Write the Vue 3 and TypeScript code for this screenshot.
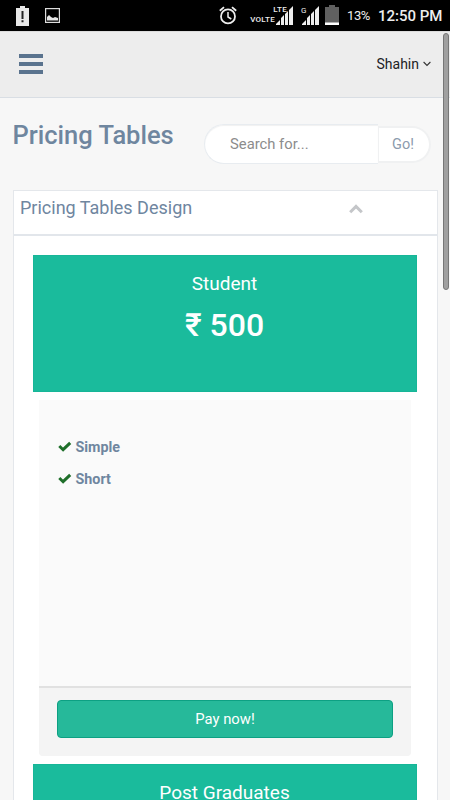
<script setup lang="ts">
interface Plan {
  name: string
  price?: string
  features: string[]
}

const plans: Plan[] = [
  { name: 'Student', price: '₹ 500', features: ['Simple', 'Short'] },
  { name: 'Post Graduates', features: [] },
]
</script>

<template>
  <div class="screen">
    <div class="status">
      <svg class="battery-alert" width="13" height="20" viewBox="0 0 13 20">
        <path d="M0 2h4V0h5v2h4v18H0z" fill="#e8e8e8" />
        <path d="M5.5 5h2v8h-2zM5.5 14.2h2v2h-2z" fill="#222" />
      </svg>
      <svg class="picture" width="15" height="15" viewBox="0 0 15 15">
        <rect x=".6" y=".6" width="13.8" height="13.8" fill="none" stroke="#ddd" stroke-width="1.2" />
        <path d="M2 12.5V9l2-2 2 2 2 1 2-1 3 1v2.5z" fill="#e6e6e6" />
      </svg>
      <svg class="alarm" width="18" height="19" viewBox="0 0 18 19" fill="none" stroke="#eee">
        <circle cx="9" cy="10.4" r="7" stroke-width="1.8" />
        <path d="M9 6v5l3.3 2" stroke-width="1.5" />
        <path d="M.8 4.8 5 1.1M17.2 4.8 13 1.1" stroke-width="1.8" />
      </svg>
      <span class="network"><span>LTE</span><span>VOLTE</span></span>
      <svg class="signal first" width="18" height="19" viewBox="0 0 18 19" fill="#eee">
        <path d="M0 19v-1l4-4v5zM5 19v-7l3-3v10zM9 19V8l3-3v14zM13 19V4l4-4v19z" />
      </svg>
      <span class="carrier">G</span>
      <svg class="signal second" width="18" height="19" viewBox="0 0 18 19" fill="#eee">
        <path d="M0 19v-1l4-4v5zM5 19v-7l3-3v10zM9 19V8l3-3v14zM13 19V4l4-4v19z" />
      </svg>
      <svg class="battery" width="14" height="20" viewBox="0 0 14 20">
        <path d="M0 2h4V0h6v2h4v18H0z" fill="#606060" />
        <path d="M0 17.5h14V20H0z" fill="#fff" />
      </svg>
      <span class="percent">13%</span>
      <span class="clock">12:50 PM</span>
    </div>

    <header class="nav">
      <div class="menu"><i></i><i></i><i></i></div>
      <div class="user">
        Shahin
        <svg width="8" height="6" viewBox="0 0 8 6"><path d="M.6 1 4 4.4 7.4 1" fill="none" stroke="#333" stroke-width="1.1" /></svg>
      </div>
    </header>

    <div class="titlebar">
      <h1>Pricing Tables</h1>
      <div class="search">
        <div class="field">Search for...</div>
        <div class="go">Go!</div>
      </div>
    </div>

    <section class="panel">
      <div class="panel-head">
        <h2>Pricing Tables Design</h2>
        <svg width="14" height="10" viewBox="0 0 14 10"><path d="M1.2 8.2 7 2.4l5.8 5.8" fill="none" stroke="#c4c6c9" stroke-width="3" /></svg>
      </div>
      <div class="plans">
        <article v-for="plan in plans" :key="plan.name" class="plan">
          <div class="plan-title">
            <h3>{{ plan.name }}</h3>
            <strong v-if="plan.price">{{ plan.price }}</strong>
          </div>
          <div v-if="plan.features.length" class="plan-box">
            <ul>
              <li v-for="feature in plan.features" :key="feature">
                <svg width="14" height="11" viewBox="0 0 14 11"><path d="M1.3 5 5.1 8.7 12.2 1.8" fill="none" stroke="#1f6f2a" stroke-width="3" /></svg>
                {{ feature }}
              </li>
            </ul>
            <div class="plan-footer"><div class="pay">Pay now!</div></div>
          </div>
        </article>
      </div>
    </section>
    <div class="scroll-thumb"></div>
  </div>
</template>

<style>
body {
  overflow: hidden;
}
</style>

<style scoped>
* {
  box-sizing: border-box;
}
.screen {
  position: relative;
  width: 450px;
  height: 800px;
  overflow: hidden;
  background: #f7f7f7;
  color: #6f869f;
  font-family: Roboto, sans-serif;
}
.status {
  display: flex;
  align-items: flex-start;
  height: 31px;
  padding: 6px 0 0 16px;
  background: #000;
  color: #eee;
  white-space: nowrap;
}
.status > * {
  flex: none;
}
.picture {
  margin: 2px 0 0 16px;
}
.alarm {
  margin-left: 159px;
}
.network {
  display: flex;
  flex-direction: column;
  align-items: flex-end;
  width: 38px;
  margin-left: 12px;
  font: 500 8px/12px Roboto, sans-serif;
  letter-spacing: 0.3px;
}
.network span:first-child {
  line-height: 8px;
}
.network span:last-child {
  margin-right: 12px;
}
.signal.first {
  margin-left: -11px;
}
.carrier {
  width: 7px;
  margin-left: 7px;
  font-size: 8px;
  line-height: 9px;
}
.signal.second {
  margin-left: -6px;
}
.battery {
  margin: -1px 0 0 5px;
}
.percent {
  width: 24px;
  margin-left: 8px;
  font-size: 13px;
  line-height: 20px;
  letter-spacing: -0.4px;
}
.clock {
  margin-left: 7px;
  font-size: 15px;
  font-weight: 500;
  line-height: 21px;
}
.nav {
  display: flex;
  justify-content: space-between;
  height: 67px;
  padding: 23px 19px 0 19px;
  background: #ededed;
  border-top: 1px solid #dcdcdc;
  padding-top: 22px;
  border-bottom: 1px solid #d9dee4;
}
.menu {
  display: flex;
  flex-direction: column;
  gap: 4px;
}
.menu i {
  width: 24px;
  height: 4px;
  background: #5a738e;
}
.user {
  display: flex;
  align-items: center;
  gap: 4px;
  height: 20px;
  color: #202125;
  font-size: 14px;
}
.titlebar {
  display: flex;
  justify-content: space-between;
  height: 92px;
  padding: 26px 19px 0 12.5px;
}
h1,
h2,
h3,
ul {
  margin: 0;
  padding: 0;
}
h1 {
  height: 24px;
  font-size: 25.5px;
  font-weight: 500;
  line-height: 22px;
}
.search {
  display: flex;
  align-items: center;
  width: 227px;
  height: 40px;
}
.field {
  width: 174px;
  height: 40px;
  padding-left: 25px;
  border: 1px solid #e8ecf0;
  border-right: 0;
  border-radius: 20px 0 0 20px;
  background: #fff;
  box-shadow: inset 0 1px 1px rgba(0, 0, 0, 0.06);
  color: #8c8c8c;
  font-size: 14.8px;
  line-height: 38px;
}
.go {
  width: 53px;
  height: 37px;
  padding-right: 2px;
  border: 2px solid #f0f1f2;
  border-left-width: 1px;
  border-radius: 0 19px 19px 0;
  background: #fff;
  color: #8c9bad;
  font-size: 14.5px;
  line-height: 33px;
  text-align: center;
}
.panel {
  width: 425px;
  height: 620px;
  margin-left: 12.5px;
  border: 1.5px solid #e4e7eb;
  background: #fff;
}
.panel-head {
  display: flex;
  justify-content: space-between;
  height: 45px;
  padding: 7px 74px 0 6.5px;
  border-bottom: 2px solid #e2e6eb;
}
h2 {
  font-size: 18px;
  font-weight: 400;
  line-height: 20px;
}
.panel-head svg {
  margin-top: 6px;
}
.plans {
  padding: 19px 18px 0 19px;
}
.plan {
  height: 509px;
}
.plan-title {
  display: flex;
  flex-direction: column;
  align-items: center;
  width: 384px;
  height: 137px;
  padding-top: 17px;
  border: 1px solid #17b698;
  background: #1abb9c;
  color: #fff;
}
h3 {
  font-size: 19px;
  font-weight: 400;
  line-height: 22px;
}
strong {
  margin-top: 11px;
  font-size: 32px;
  font-weight: 500;
  line-height: 38px;
}
.plan-box {
  width: 372px;
  height: 356px;
  margin: 8px 0 0 6.5px;
  border-radius: 0 0 4px 4px;
  background: #fafafa;
}
ul {
  height: 286px;
  padding: 30.5px 0 0 18.5px;
  list-style: none;
}
li {
  display: flex;
  align-items: center;
  gap: 4px;
  height: 32px;
  font-size: 14.3px;
  font-weight: 700;
}
.plan-footer {
  height: 70px;
  padding: 12px 18px 0;
  border-top: 2px solid #e1e1e1;
  border-radius: 0 0 4px 4px;
  background: #f4f4f4;
}
.pay {
  width: 336px;
  height: 38px;
  border: 1px solid #0da083;
  border-radius: 4px;
  background: #26b99a;
  color: #fff;
  font-size: 14.8px;
  line-height: 36px;
  text-align: center;
}
.scroll-thumb {
  position: absolute;
  top: 33px;
  left: 443px;
  width: 6px;
  height: 257px;
  border: 1px solid #777;
  border-radius: 3px;
  background: #a0a0a0;
}
</style>
